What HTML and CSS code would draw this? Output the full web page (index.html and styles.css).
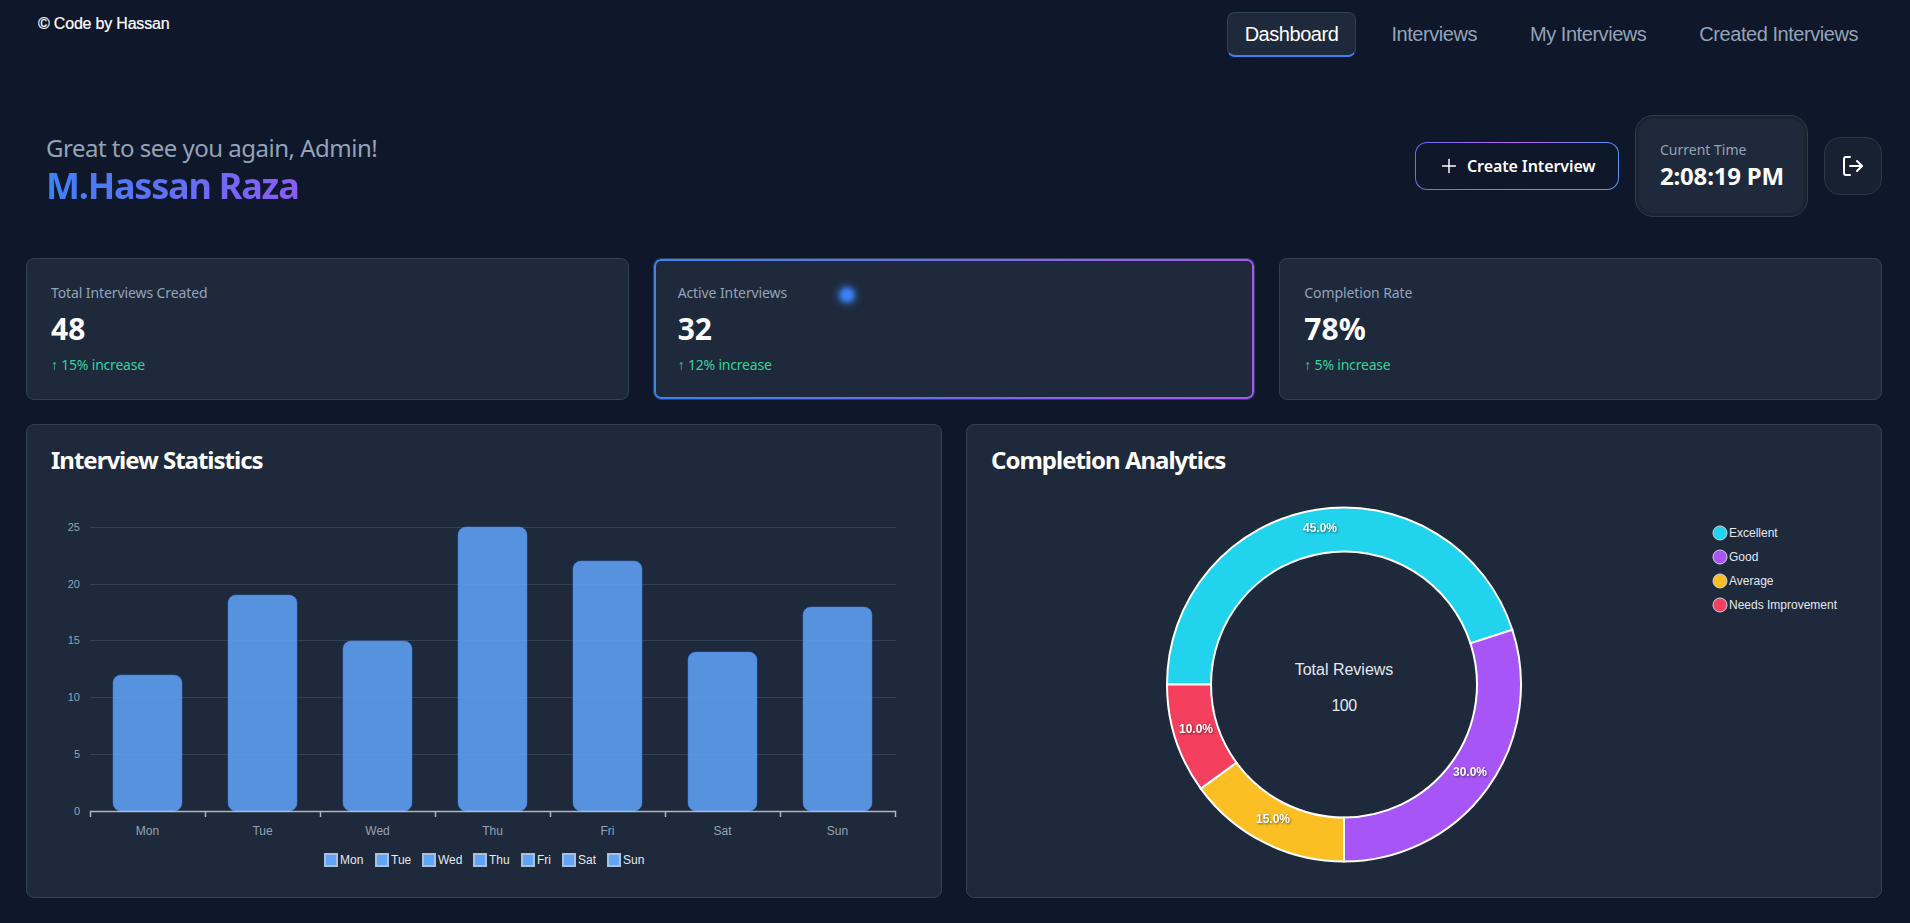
FILE: index.html
```html
<!DOCTYPE html>
<html lang="en">
<head>
<meta charset="UTF-8">
<meta name="viewport" content="width=device-width, initial-scale=1.0">
<title>Dashboard</title>
<link rel="stylesheet" href="styles.css">
</head>
<body>
<header class="topbar">
    <div class="brand">© Code by Hassan</div>
    <nav class="nav">
        <a class="nav-item nav-active">Dashboard</a>
        <a class="nav-item">Interviews</a>
        <a class="nav-item">My Interviews</a>
        <a class="nav-item">Created Interviews</a>
    </nav>
</header>

<section class="hero">
    <div class="welcome">
        <p class="greeting">Great to see you again, Admin!</p>
        <h1 class="admin-name">M.Hassan Raza</h1>
    </div>
    <div class="actions">
        <button class="create-btn">
            <svg class="icon" viewBox="0 0 24 24"><path d="M5 12h14"/><path d="M12 5v14"/></svg>
            Create Interview
        </button>
        <div class="clock">
            <div class="clock-label">Current Time</div>
            <div class="clock-time">2:08:19 PM</div>
        </div>
        <button class="logout-btn">
            <svg class="icon" viewBox="0 0 24 24"><path d="M9 21H5a2 2 0 0 1-2-2V5a2 2 0 0 1 2-2h4"/><polyline points="16 17 21 12 16 7"/><line x1="21" y1="12" x2="9" y2="12"/></svg>
        </button>
    </div>
</section>

<section class="stats">
    <div class="stat-card">
        <div class="stat-label">Total Interviews Created</div>
        <div class="stat-value">48</div>
        <div class="stat-change">↑ 15% increase</div>
    </div>
    <div class="stat-card stat-active">
        <span class="glow-dot"></span>
        <div class="stat-label">Active Interviews</div>
        <div class="stat-value">32</div>
        <div class="stat-change">↑ 12% increase</div>
    </div>
    <div class="stat-card">
        <div class="stat-label">Completion Rate</div>
        <div class="stat-value">78%</div>
        <div class="stat-change">↑ 5% increase</div>
    </div>
</section>

<section class="charts">
    <div class="chart-card">
        <h2 class="chart-title">Interview Statistics</h2>
        <svg class="chart" viewBox="0 0 865 372">
            <!-- grid -->
            <path class="grid-line" d="M39 27.5H845M39 84.5H845M39 140.5H845M39 197.5H845M39 254.5H845"/>
            <text class="y-label" x="29" y="31">25</text>
            <text class="y-label" x="29" y="88">20</text>
            <text class="y-label" x="29" y="144">15</text>
            <text class="y-label" x="29" y="201">10</text>
            <text class="y-label" x="29" y="258">5</text>
            <text class="y-label" x="29" y="315">0</text>
            <!-- bars -->
            <rect class="bar" x="62" y="175" width="69" height="136" rx="8"/>
            <rect class="bar" x="177" y="95" width="69" height="216" rx="8"/>
            <rect class="bar" x="292" y="141" width="69" height="170" rx="8"/>
            <rect class="bar" x="407" y="27" width="69" height="284" rx="8"/>
            <rect class="bar" x="522" y="61" width="69" height="250" rx="8"/>
            <rect class="bar" x="637" y="152" width="69" height="159" rx="8"/>
            <rect class="bar" x="752" y="107" width="69" height="204" rx="8"/>
            <!-- axis -->
            <path class="axis-line" d="M39.5 317V311.5H844.5V317M154.5 311.5V317M269.5 311.5V317M384.5 311.5V317M499.5 311.5V317M614.5 311.5V317M729.5 311.5V317"/>
            <text class="x-label" x="96.5" y="335">Mon</text>
            <text class="x-label" x="211.5" y="335">Tue</text>
            <text class="x-label" x="326.5" y="335">Wed</text>
            <text class="x-label" x="441.5" y="335">Thu</text>
            <text class="x-label" x="556.5" y="335">Fri</text>
            <text class="x-label" x="671.5" y="335">Sat</text>
            <text class="x-label" x="786.5" y="335">Sun</text>
            <!-- legend -->
            <rect class="swatch" x="274" y="354" width="12" height="12"/><text class="legend-text" x="289" y="364">Mon</text>
            <rect class="swatch" x="325" y="354" width="12" height="12"/><text class="legend-text" x="340" y="364">Tue</text>
            <rect class="swatch" x="372" y="354" width="12" height="12"/><text class="legend-text" x="387" y="364">Wed</text>
            <rect class="swatch" x="423" y="354" width="12" height="12"/><text class="legend-text" x="438" y="364">Thu</text>
            <rect class="swatch" x="471" y="354" width="12" height="12"/><text class="legend-text" x="486" y="364">Fri</text>
            <rect class="swatch" x="512" y="354" width="12" height="12"/><text class="legend-text" x="527" y="364">Sat</text>
            <rect class="swatch" x="557" y="354" width="12" height="12"/><text class="legend-text" x="572" y="364">Sun</text>
        </svg>
    </div>

    <div class="chart-card">
        <h2 class="chart-title">Completion Analytics</h2>
        <svg class="chart" viewBox="0 0 865 372">
            <g transform="translate(353 184.5)">
                <path class="slice slice-cyan" d="M-177 0A177 177 0 0 1 168.34 -54.7L126.49 -41.1A133 133 0 0 0 -133 0Z"/>
                <path class="slice slice-purple" d="M168.34 -54.7A177 177 0 0 1 0 177L0 133A133 133 0 0 0 126.49 -41.1Z"/>
                <path class="slice slice-amber" d="M0 177A177 177 0 0 1 -143.2 104.04L-107.6 78.18A133 133 0 0 0 0 133Z"/>
                <path class="slice slice-red" d="M-143.2 104.04A177 177 0 0 1 -177 0L-133 0A133 133 0 0 0 -107.6 78.18Z"/>
                <text class="slice-label" x="-24" y="-153">45.0%</text>
                <text class="slice-label" x="126" y="91">30.0%</text>
                <text class="slice-label" x="-71" y="138">15.0%</text>
                <text class="slice-label" x="-148" y="48">10.0%</text>
                <text class="center-title" x="0" y="-10">Total Reviews</text>
                <text class="center-value" x="0" y="26">100</text>
            </g>
            <circle class="dot slice-cyan" cx="729" cy="33" r="7"/><text class="legend-text" x="738" y="37">Excellent</text>
            <circle class="dot slice-purple" cx="729" cy="57" r="7"/><text class="legend-text" x="738" y="61">Good</text>
            <circle class="dot slice-amber" cx="729" cy="81" r="7"/><text class="legend-text" x="738" y="85">Average</text>
            <circle class="dot slice-red" cx="729" cy="105" r="7"/><text class="legend-text" x="738" y="109">Needs Improvement</text>
        </svg>
    </div>
</section>
</body>
</html>
```

FILE: styles.css
```css
body {
    margin: 0;
    background-color: #0f172a;
    color: #fff;
    font-family: "Noto Sans", sans-serif;
}

.topbar {
    display: flex;
    justify-content: space-between;
    align-items: flex-start;
    padding: 12px 34px 0 38px;
}

.brand {
    font-family: "Liberation Sans", Arial, sans-serif;
    font-size: 16px;
    line-height: 24px;
    letter-spacing: -0.2px;
    -webkit-text-stroke: 0.2px #fff;
}

.nav {
    display: flex;
    gap: 17px;
}

.nav-item {
    padding: 0 17px;
    height: 45px;
    box-sizing: border-box;
    border: 1px solid transparent;
    border-radius: 8px;
    color: #94a3b8;
    font-family: "Liberation Sans", Arial, sans-serif;
    font-size: 20px;
    line-height: 43px;
    letter-spacing: -0.45px;
}

.nav-active {
    background-color: #1e293b;
    border-color: #334155;
    border-bottom: 2px solid #3b82f6;
    color: #fff;
}

.hero {
    display: flex;
    justify-content: space-between;
    align-items: center;
    margin-top: 58px;
    padding: 0 28px 0 46px;
}

.welcome {
    padding-top: 6px;
}

.greeting {
    margin: 0 0 2px;
    color: #94a3b8;
    font-size: 24px;
    line-height: 32px;
    letter-spacing: -0.5px;
}

.admin-name {
    margin: 0;
    width: fit-content;
    font-size: 36px;
    font-weight: 700;
    line-height: 40px;
    letter-spacing: -1.2px;
    background: linear-gradient(90deg, #3b82f6, #8b5cf6);
    -webkit-background-clip: text;
    background-clip: text;
    color: transparent;
}

.actions {
    display: flex;
    align-items: center;
    gap: 16px;
}

.icon {
    width: 24px;
    height: 24px;
    fill: none;
    stroke: #fff;
    stroke-width: 2;
    stroke-linecap: round;
    stroke-linejoin: round;
}

.create-btn {
    display: flex;
    align-items: center;
    gap: 7px;
    width: 204px;
    height: 48px;
    padding: 0 22px;
    border: 1.5px solid transparent;
    border-radius: 12px;
    background: linear-gradient(#0f172a, #0f172a) padding-box,
        linear-gradient(90deg, #6b6ff5, #b565f5, #5b94f5) border-box;
    color: #fff;
    font-family: inherit;
    font-size: 16px;
    font-weight: 600;
    letter-spacing: -0.1px;
    white-space: nowrap;
}

.create-btn .icon {
    width: 22px;
    height: 22px;
    stroke-width: 1.6;
}

.clock {
    box-sizing: border-box;
    width: 173px;
    padding: 24px;
    background-color: #1e293b;
    border: 1px solid #2f3b4e;
    border-radius: 18px;
    box-shadow: inset 0 0 0 3px #1a2332;
}

.clock-label {
    color: #94a3b8;
    font-size: 14px;
    line-height: 20px;
}

.clock-time {
    font-size: 24px;
    font-weight: 700;
    line-height: 32px;
    letter-spacing: -0.2px;
    white-space: nowrap;
}

.logout-btn {
    display: flex;
    justify-content: center;
    align-items: center;
    width: 58px;
    height: 58px;
    padding: 0;
    background-color: #172132;
    border: 1px solid #2b3749;
    border-radius: 16px;
}

.stats {
    display: grid;
    grid-template-columns: repeat(3, 1fr);
    gap: 24px;
    margin: 41px 28px 0 26px;
}

.stat-card {
    position: relative;
    padding: 24px;
    background-color: #1e293b;
    border: 1px solid #334155;
    border-radius: 8px;
}

.stat-active::before {
    content: "";
    position: absolute;
    inset: 0;
    padding: 2px;
    border-radius: 7px;
    background: linear-gradient(90deg, #3b82f6, #a855f7);
    -webkit-mask: linear-gradient(#000 0 0) content-box, linear-gradient(#000 0 0);
    -webkit-mask-composite: xor;
    mask-composite: exclude;
}

.glow-dot {
    position: absolute;
    left: 186px;
    top: 29px;
    width: 14px;
    height: 14px;
    border-radius: 50%;
    background-color: #3b82f6;
    box-shadow: 0 0 6px 2px rgba(59, 130, 246, 0.7);
    filter: blur(2px);
}

.stat-label {
    color: #94a3b8;
    font-size: 14px;
    line-height: 20px;
    letter-spacing: -0.1px;
}

.stat-value {
    margin-top: 8px;
    font-size: 30px;
    font-weight: 700;
    line-height: 36px;
}

.stat-change {
    margin-top: 8px;
    color: #34d399;
    font-size: 14px;
    line-height: 20px;
    letter-spacing: -0.2px;
}

.charts {
    display: grid;
    grid-template-columns: repeat(2, 1fr);
    gap: 24px;
    margin: 24px 28px 0 26px;
}

.chart-card {
    padding: 23px 24px 25px;
    background-color: #1e293b;
    border: 1px solid #334155;
    border-radius: 8px;
}

.chart-title {
    margin: 0 0 28px;
    font-size: 24px;
    font-weight: 700;
    line-height: 24px;
    letter-spacing: -1px;
}

.chart {
    display: block;
    width: 865px;
    height: 372px;
    font-family: "Liberation Sans", Arial, sans-serif;
}

.grid-line {
    fill: none;
    stroke: #334155;
    stroke-width: 1;
}

.y-label {
    fill: #94a3b8;
    font-size: 11px;
    text-anchor: end;
}

.x-label {
    fill: #94a3b8;
    font-size: 12px;
    text-anchor: middle;
}

.bar {
    fill: rgba(96, 165, 250, 0.85);
    stroke: rgba(59, 130, 246, 0.5);
    stroke-width: 1;
}

.axis-line {
    fill: none;
    stroke: rgba(255, 255, 255, 0.65);
    stroke-width: 1.5;
}

.swatch {
    fill: #60a5fa;
    stroke: #a9bfdc;
    stroke-width: 2;
}

.legend-text {
    fill: #e2e8f0;
    font-size: 12px;
}

.slice {
    stroke: #fff;
    stroke-width: 2;
}

.slice-cyan { fill: #22d3ee; }
.slice-purple { fill: #a855f7; }
.slice-amber { fill: #fbbf24; }
.slice-red { fill: #f43f5e; }

.dot {
    stroke: #cbd5e1;
    stroke-width: 1;
}

.slice-label {
    fill: #fff;
    font-size: 12px;
    font-weight: 700;
    text-anchor: middle;
    filter: drop-shadow(1px 1px 1px rgba(0, 0, 0, 0.5));
}

.center-title {
    fill: #e2e8f0;
    font-size: 16px;
    text-anchor: middle;
}

.center-value {
    fill: #e2e8f0;
    font-size: 16px;
    letter-spacing: -0.5px;
    text-anchor: middle;
}
```
